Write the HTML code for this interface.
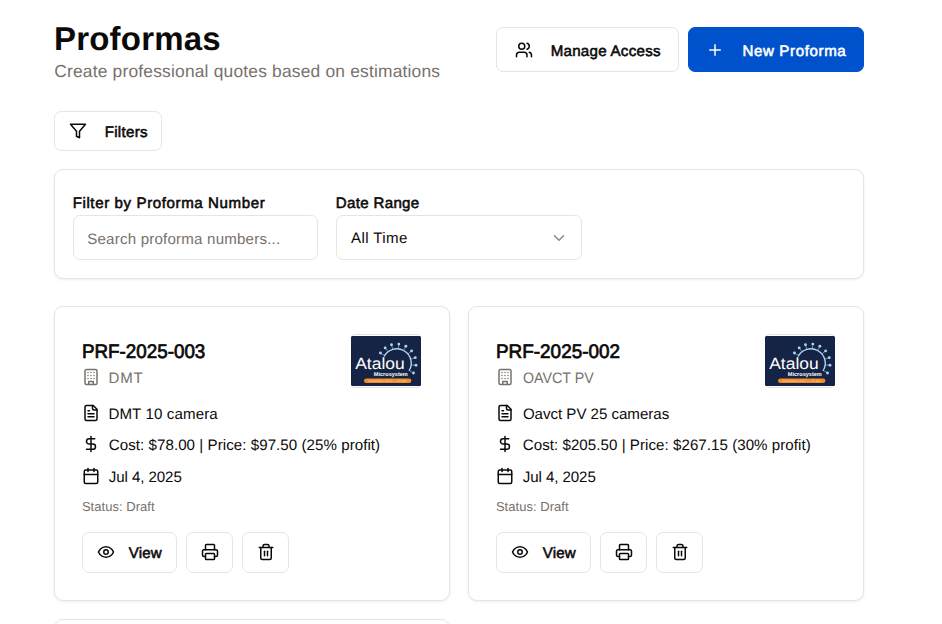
<!DOCTYPE html>
<html lang="en">
<head>
<meta charset="utf-8">
<title>Proformas</title>
<style>
*{box-sizing:border-box;margin:0;padding:0}
html,body{width:942px;height:624px;overflow:hidden;background:#fff}
body{position:relative;font-family:"Liberation Sans",sans-serif;color:#0c0a09;text-rendering:geometricPrecision}
.card{position:absolute;border:1px solid #e7e5e4;border-radius:9px;background:#fff;box-shadow:0 1px 3px rgba(0,0,0,.07)}
.btn{position:absolute;border:1px solid #e7e5e4;border-radius:7px;background:#fff}
.t{position:absolute;white-space:nowrap;line-height:1;font-weight:400;transform-origin:0 50%}
svg{position:absolute;overflow:visible}
.ic{fill:none;stroke-linecap:round;stroke-linejoin:round}
.logo{position:absolute;width:70px;height:50px;border-radius:2px}
.logob{position:absolute;width:70px;height:54px;border:1px solid #e4e2e1;border-radius:4px}

</style>
</head>
<body>

<div class="btn" style="left:496px;top:27px;width:183px;height:45px"></div>
<svg class="ic" style="left:514.5px;top:40.8px;stroke:#0c0a09;stroke-width:2" width="18" height="18" viewBox="0 0 24 24"><path d="M16 21v-2a4 4 0 0 0-4-4H6a4 4 0 0 0-4 4v2"/><circle cx="9" cy="7" r="4"/><path d="M22 21v-2a4 4 0 0 0-3-3.87"/><path d="M16 3.13a4 4 0 0 1 0 7.75"/></svg>
<div class="btn" style="left:688px;top:27px;width:176px;height:45px;background:#0052cc;border-color:#0052cc"></div>
<svg class="ic" style="left:706.1px;top:41.2px;stroke:#fff;stroke-width:2" width="18" height="18" viewBox="0 0 24 24"><path d="M5 12h14"/><path d="M12 5v14"/></svg>
<div class="btn" style="left:54px;top:111px;width:108px;height:40px"></div>
<svg class="ic" style="left:69px;top:122px;stroke:#0c0a09;stroke-width:2" width="18" height="18" viewBox="0 0 24 24"><polygon points="22 3 2 3 10 12.46 10 19 14 21 14 12.46 22 3"/></svg>
<div class="card" style="left:54px;top:169px;width:810px;height:110px"></div>
<div class="btn" style="left:73px;top:215px;width:245px;height:45px"></div>
<div class="btn" style="left:336px;top:215px;width:246px;height:45px"></div>
<svg class="ic" style="left:549.5px;top:229px;stroke:#8a8a8a;stroke-width:2" width="18" height="18" viewBox="0 0 24 24"><path d="m6 9 6 6 6-6"/></svg>
<div class="card" style="left:54px;top:306px;width:396px;height:295px"></div>
<div class="logob" style="left:351px;top:334px"></div>
<div class="logo" style="left:351px;top:336px"><svg width="70" height="50" viewBox="0 0 70 50" style="position:static;display:block">
<rect width="70" height="50" rx="1.5" fill="#152344"/><path d="M33.09 20.54A14.4 14.4 0 1 1 58.01 34.93" fill="none" stroke="#b3d8f5" stroke-width="1.35"/><line x1="33.59" y1="19.67" x2="29.43" y2="17.07" stroke="#a9d2f3" stroke-width=".6"/><circle cx="29.43" cy="17.07" r="1.45" fill="#a9d2f3"/><line x1="37.13" y1="15.80" x2="34.18" y2="11.89" stroke="#a9d2f3" stroke-width=".6"/><circle cx="34.18" cy="11.89" r="1.45" fill="#a9d2f3"/><line x1="41.83" y1="13.46" x2="40.48" y2="8.75" stroke="#a9d2f3" stroke-width=".6"/><circle cx="40.48" cy="8.75" r="1.45" fill="#a9d2f3"/><line x1="47.31" y1="12.98" x2="47.82" y2="8.11" stroke="#a9d2f3" stroke-width=".6"/><circle cx="47.82" cy="8.11" r="1.45" fill="#a9d2f3"/><line x1="52.56" y1="14.59" x2="54.86" y2="10.26" stroke="#a9d2f3" stroke-width=".6"/><circle cx="54.86" cy="10.26" r="1.45" fill="#a9d2f3"/><line x1="56.83" y1="18.04" x2="60.58" y2="14.89" stroke="#a9d2f3" stroke-width=".6"/><circle cx="60.58" cy="14.89" r="1.45" fill="#a9d2f3"/><line x1="59.57" y1="23.09" x2="64.26" y2="21.66" stroke="#a9d2f3" stroke-width=".6"/><circle cx="64.26" cy="21.66" r="1.45" fill="#a9d2f3"/><line x1="60.12" y1="28.81" x2="64.99" y2="29.32" stroke="#a9d2f3" stroke-width=".6"/><circle cx="64.99" cy="29.32" r="1.45" fill="#a9d2f3"/><line x1="58.27" y1="34.50" x2="62.51" y2="36.95" stroke="#a9d2f3" stroke-width=".6"/><circle cx="62.51" cy="36.95" r="1.45" fill="#a9d2f3"/>
<text x="4.2" y="32.9" font-family="Liberation Sans, sans-serif" font-size="16.2" fill="#fff" textLength="49.5" lengthAdjust="spacingAndGlyphs">Atalou</text>
<text x="22.8" y="39.9" font-family="Liberation Sans, sans-serif" font-size="5.6" font-weight="700" fill="#fff" textLength="34" lengthAdjust="spacingAndGlyphs">Microsystem</text>
<rect x="13" y="42.4" width="47.4" height="4.6" rx="2.3" fill="#f28c28"/>
<text x="17.5" y="46" font-family="Liberation Sans, sans-serif" font-size="3.4" fill="#fbd3a8" textLength="38" lengthAdjust="spacingAndGlyphs">Décembre 2022 — 23 pm</text>
</svg></div>
<svg class="ic" style="left:82px;top:367.7px;stroke:#78716c;stroke-width:2" width="18" height="18" viewBox="0 0 24 24"><rect width="16" height="20" x="4" y="2" rx="2" ry="2"/><path d="M9 22v-4h6v4"/><path d="M8 6h.01"/><path d="M16 6h.01"/><path d="M12 6h.01"/><path d="M12 10h.01"/><path d="M12 14h.01"/><path d="M16 10h.01"/><path d="M16 14h.01"/><path d="M8 10h.01"/><path d="M8 14h.01"/></svg>
<svg class="ic" style="left:82px;top:403.8px;stroke:#0c0a09;stroke-width:2" width="18" height="18" viewBox="0 0 24 24"><path d="M15 2H6a2 2 0 0 0-2 2v16a2 2 0 0 0 2 2h12a2 2 0 0 0 2-2V7Z"/><path d="M14 2v4a2 2 0 0 0 2 2h4"/><path d="M10 9H8"/><path d="M16 13H8"/><path d="M16 17H8"/></svg>
<svg class="ic" style="left:81.6px;top:434.6px;stroke:#0c0a09;stroke-width:2" width="18" height="18" viewBox="0 0 24 24"><line x1="12" x2="12" y1="2" y2="22"/><path d="M17 5H9.5a3.5 3.5 0 0 0 0 7h5a3.5 3.5 0 0 1 0 7H6"/></svg>
<svg class="ic" style="left:81.6px;top:467.2px;stroke:#0c0a09;stroke-width:2" width="18" height="18" viewBox="0 0 24 24"><path d="M8 2v4"/><path d="M16 2v4"/><rect width="18" height="18" x="3" y="4" rx="2"/><path d="M3 10h18"/></svg>
<div class="btn" style="left:82px;top:532px;width:95px;height:41px"></div>
<svg class="ic" style="left:97.3px;top:543.2px;stroke:#0c0a09;stroke-width:2" width="18" height="18" viewBox="0 0 24 24"><path d="M2 12s3-7 10-7 10 7 10 7-3 7-10 7-10-7-10-7Z"/><circle cx="12" cy="12" r="3"/></svg>
<div class="btn" style="left:186px;top:532px;width:47px;height:41px"></div>
<svg class="ic" style="left:201px;top:543px;stroke:#0c0a09;stroke-width:2" width="18" height="18" viewBox="0 0 24 24"><path d="M6 18H4a2 2 0 0 1-2-2v-5a2 2 0 0 1 2-2h16a2 2 0 0 1 2 2v5a2 2 0 0 1-2 2h-2"/><path d="M6 9V3a1 1 0 0 1 1-1h10a1 1 0 0 1 1 1v6"/><rect x="6" y="14" width="12" height="8" rx="1"/></svg>
<div class="btn" style="left:242px;top:532px;width:47px;height:41px"></div>
<svg class="ic" style="left:257.2px;top:543px;stroke:#0c0a09;stroke-width:2" width="18" height="18" viewBox="0 0 24 24"><path d="M3 6h18"/><path d="M19 6v14c0 1-1 2-2 2H7c-1 0-2-1-2-2V6"/><path d="M8 6V4c0-1 1-2 2-2h4c1 0 2 1 2 2v2"/><line x1="10" x2="10" y1="11" y2="17"/><line x1="14" x2="14" y1="11" y2="17"/></svg>
<div class="card" style="left:468px;top:306px;width:396px;height:295px"></div>
<div class="logob" style="left:765px;top:334px"></div>
<div class="logo" style="left:765px;top:336px"><svg width="70" height="50" viewBox="0 0 70 50" style="position:static;display:block">
<rect width="70" height="50" rx="1.5" fill="#152344"/><path d="M33.09 20.54A14.4 14.4 0 1 1 58.01 34.93" fill="none" stroke="#b3d8f5" stroke-width="1.35"/><line x1="33.59" y1="19.67" x2="29.43" y2="17.07" stroke="#a9d2f3" stroke-width=".6"/><circle cx="29.43" cy="17.07" r="1.45" fill="#a9d2f3"/><line x1="37.13" y1="15.80" x2="34.18" y2="11.89" stroke="#a9d2f3" stroke-width=".6"/><circle cx="34.18" cy="11.89" r="1.45" fill="#a9d2f3"/><line x1="41.83" y1="13.46" x2="40.48" y2="8.75" stroke="#a9d2f3" stroke-width=".6"/><circle cx="40.48" cy="8.75" r="1.45" fill="#a9d2f3"/><line x1="47.31" y1="12.98" x2="47.82" y2="8.11" stroke="#a9d2f3" stroke-width=".6"/><circle cx="47.82" cy="8.11" r="1.45" fill="#a9d2f3"/><line x1="52.56" y1="14.59" x2="54.86" y2="10.26" stroke="#a9d2f3" stroke-width=".6"/><circle cx="54.86" cy="10.26" r="1.45" fill="#a9d2f3"/><line x1="56.83" y1="18.04" x2="60.58" y2="14.89" stroke="#a9d2f3" stroke-width=".6"/><circle cx="60.58" cy="14.89" r="1.45" fill="#a9d2f3"/><line x1="59.57" y1="23.09" x2="64.26" y2="21.66" stroke="#a9d2f3" stroke-width=".6"/><circle cx="64.26" cy="21.66" r="1.45" fill="#a9d2f3"/><line x1="60.12" y1="28.81" x2="64.99" y2="29.32" stroke="#a9d2f3" stroke-width=".6"/><circle cx="64.99" cy="29.32" r="1.45" fill="#a9d2f3"/><line x1="58.27" y1="34.50" x2="62.51" y2="36.95" stroke="#a9d2f3" stroke-width=".6"/><circle cx="62.51" cy="36.95" r="1.45" fill="#a9d2f3"/>
<text x="4.2" y="32.9" font-family="Liberation Sans, sans-serif" font-size="16.2" fill="#fff" textLength="49.5" lengthAdjust="spacingAndGlyphs">Atalou</text>
<text x="22.8" y="39.9" font-family="Liberation Sans, sans-serif" font-size="5.6" font-weight="700" fill="#fff" textLength="34" lengthAdjust="spacingAndGlyphs">Microsystem</text>
<rect x="13" y="42.4" width="47.4" height="4.6" rx="2.3" fill="#f28c28"/>
<text x="17.5" y="46" font-family="Liberation Sans, sans-serif" font-size="3.4" fill="#fbd3a8" textLength="38" lengthAdjust="spacingAndGlyphs">Décembre 2022 — 23 pm</text>
</svg></div>
<svg class="ic" style="left:496px;top:367.7px;stroke:#78716c;stroke-width:2" width="18" height="18" viewBox="0 0 24 24"><rect width="16" height="20" x="4" y="2" rx="2" ry="2"/><path d="M9 22v-4h6v4"/><path d="M8 6h.01"/><path d="M16 6h.01"/><path d="M12 6h.01"/><path d="M12 10h.01"/><path d="M12 14h.01"/><path d="M16 10h.01"/><path d="M16 14h.01"/><path d="M8 10h.01"/><path d="M8 14h.01"/></svg>
<svg class="ic" style="left:496px;top:403.8px;stroke:#0c0a09;stroke-width:2" width="18" height="18" viewBox="0 0 24 24"><path d="M15 2H6a2 2 0 0 0-2 2v16a2 2 0 0 0 2 2h12a2 2 0 0 0 2-2V7Z"/><path d="M14 2v4a2 2 0 0 0 2 2h4"/><path d="M10 9H8"/><path d="M16 13H8"/><path d="M16 17H8"/></svg>
<svg class="ic" style="left:495.6px;top:434.6px;stroke:#0c0a09;stroke-width:2" width="18" height="18" viewBox="0 0 24 24"><line x1="12" x2="12" y1="2" y2="22"/><path d="M17 5H9.5a3.5 3.5 0 0 0 0 7h5a3.5 3.5 0 0 1 0 7H6"/></svg>
<svg class="ic" style="left:495.6px;top:467.2px;stroke:#0c0a09;stroke-width:2" width="18" height="18" viewBox="0 0 24 24"><path d="M8 2v4"/><path d="M16 2v4"/><rect width="18" height="18" x="3" y="4" rx="2"/><path d="M3 10h18"/></svg>
<div class="btn" style="left:496px;top:532px;width:95px;height:41px"></div>
<svg class="ic" style="left:511.3px;top:543.2px;stroke:#0c0a09;stroke-width:2" width="18" height="18" viewBox="0 0 24 24"><path d="M2 12s3-7 10-7 10 7 10 7-3 7-10 7-10-7-10-7Z"/><circle cx="12" cy="12" r="3"/></svg>
<div class="btn" style="left:600px;top:532px;width:47px;height:41px"></div>
<svg class="ic" style="left:615px;top:543px;stroke:#0c0a09;stroke-width:2" width="18" height="18" viewBox="0 0 24 24"><path d="M6 18H4a2 2 0 0 1-2-2v-5a2 2 0 0 1 2-2h16a2 2 0 0 1 2 2v5a2 2 0 0 1-2 2h-2"/><path d="M6 9V3a1 1 0 0 1 1-1h10a1 1 0 0 1 1 1v6"/><rect x="6" y="14" width="12" height="8" rx="1"/></svg>
<div class="btn" style="left:656px;top:532px;width:47px;height:41px"></div>
<svg class="ic" style="left:671.2px;top:543px;stroke:#0c0a09;stroke-width:2" width="18" height="18" viewBox="0 0 24 24"><path d="M3 6h18"/><path d="M19 6v14c0 1-1 2-2 2H7c-1 0-2-1-2-2V6"/><path d="M8 6V4c0-1 1-2 2-2h4c1 0 2 1 2 2v2"/><line x1="10" x2="10" y1="11" y2="17"/><line x1="14" x2="14" y1="11" y2="17"/></svg>
<div class="card" style="left:54px;top:619px;width:396px;height:295px"></div>
<h1 class="t" id="h1" style="left:54.05px;top:22.00px;font-size:33px;font-weight:700;color:#0c0a09;letter-spacing:0.188px">Proformas</h1>
<p class="t" id="sub" style="left:54.25px;top:63.00px;font-size:17.4px;color:#78716c;letter-spacing:0.190px">Create professional quotes based on estimations</p>
<span class="t sb" id="ma" style="left:550.65px;top:44.00px;font-size:15.1px;-webkit-text-stroke:0.56px #0c0a09;color:#0c0a09;letter-spacing:0.279px">Manage Access</span>
<span class="t sb" id="np" style="left:742.45px;top:44.00px;font-size:15.1px;-webkit-text-stroke:0.56px #ffffff;color:#ffffff;letter-spacing:0.623px">New Proforma</span>
<span class="t sb" id="fl" style="left:104.65px;top:125.00px;font-size:15.1px;-webkit-text-stroke:0.56px #0c0a09;color:#0c0a09;letter-spacing:0.317px">Filters</span>
<label class="t sb" id="l1" style="left:72.65px;top:196.00px;font-size:15.1px;-webkit-text-stroke:0.56px #0c0a09;color:#0c0a09;letter-spacing:0.596px">Filter by Proforma Number</label>
<span class="t" id="ph" style="left:87.25px;top:232.00px;font-size:15.1px;color:#78716c;letter-spacing:0.200px">Search proforma numbers...</span>
<label class="t sb" id="l2" style="left:335.80px;top:196.00px;font-size:15.1px;-webkit-text-stroke:0.56px #0c0a09;color:#0c0a09;letter-spacing:0.317px">Date Range</label>
<span class="t" id="at" style="left:351.00px;top:231.00px;font-size:15.1px;color:#0c0a09;letter-spacing:0.379px">All Time</span>
<h3 class="t sb" id="cat" style="left:81.65px;top:343.00px;font-size:19.6px;-webkit-text-stroke:0.73px #0c0a09;color:#0c0a09;transform:scaleX(0.9595);">PRF-2025-003</h3>
<span class="t" id="cac" style="left:108.40px;top:371.00px;font-size:15.1px;color:#78716c;letter-spacing:0.875px">DMT</span>
<span class="t" id="cad" style="left:108.40px;top:407.00px;font-size:15.1px;color:#0c0a09;letter-spacing:0.117px">DMT 10 camera</span>
<span class="t" id="cak" style="left:108.75px;top:438.00px;font-size:15.1px;color:#0c0a09;letter-spacing:0.059px">Cost: $78.00 | Price: $97.50 (25% profit)</span>
<span class="t" id="caj" style="left:108.70px;top:470.00px;font-size:15.1px;color:#0c0a09;letter-spacing:-0.075px">Jul 4, 2025</span>
<span class="t" id="cas" style="left:81.90px;top:500.00px;font-size:13px;color:#78716c;letter-spacing:0.033px">Status: Draft</span>
<span class="t sb" id="cav" style="left:128.75px;top:546.00px;font-size:15.1px;-webkit-text-stroke:0.56px #0c0a09;color:#0c0a09;letter-spacing:0.183px">View</span>
<h3 class="t sb" id="cbt" style="left:495.65px;top:343.00px;font-size:19.6px;-webkit-text-stroke:0.73px #0c0a09;color:#0c0a09;transform:scaleX(0.9649);">PRF-2025-002</h3>
<span class="t" id="cbc" style="left:523.15px;top:371.00px;font-size:15.1px;color:#78716c;transform:scaleX(0.9448);">OAVCT PV</span>
<span class="t" id="cbd" style="left:522.90px;top:407.00px;font-size:15.1px;color:#0c0a09;letter-spacing:-0.028px">Oavct PV 25 cameras</span>
<span class="t" id="cbk" style="left:522.75px;top:438.00px;font-size:15.1px;color:#0c0a09;letter-spacing:0.051px">Cost: $205.50 | Price: $267.15 (30% profit)</span>
<span class="t" id="cbj" style="left:522.70px;top:470.00px;font-size:15.1px;color:#0c0a09;letter-spacing:-0.075px">Jul 4, 2025</span>
<span class="t" id="cbs" style="left:495.90px;top:500.00px;font-size:13px;color:#78716c;letter-spacing:0.033px">Status: Draft</span>
<span class="t sb" id="cbv" style="left:542.75px;top:546.00px;font-size:15.1px;-webkit-text-stroke:0.56px #0c0a09;color:#0c0a09;letter-spacing:0.183px">View</span>
</body>
</html>
